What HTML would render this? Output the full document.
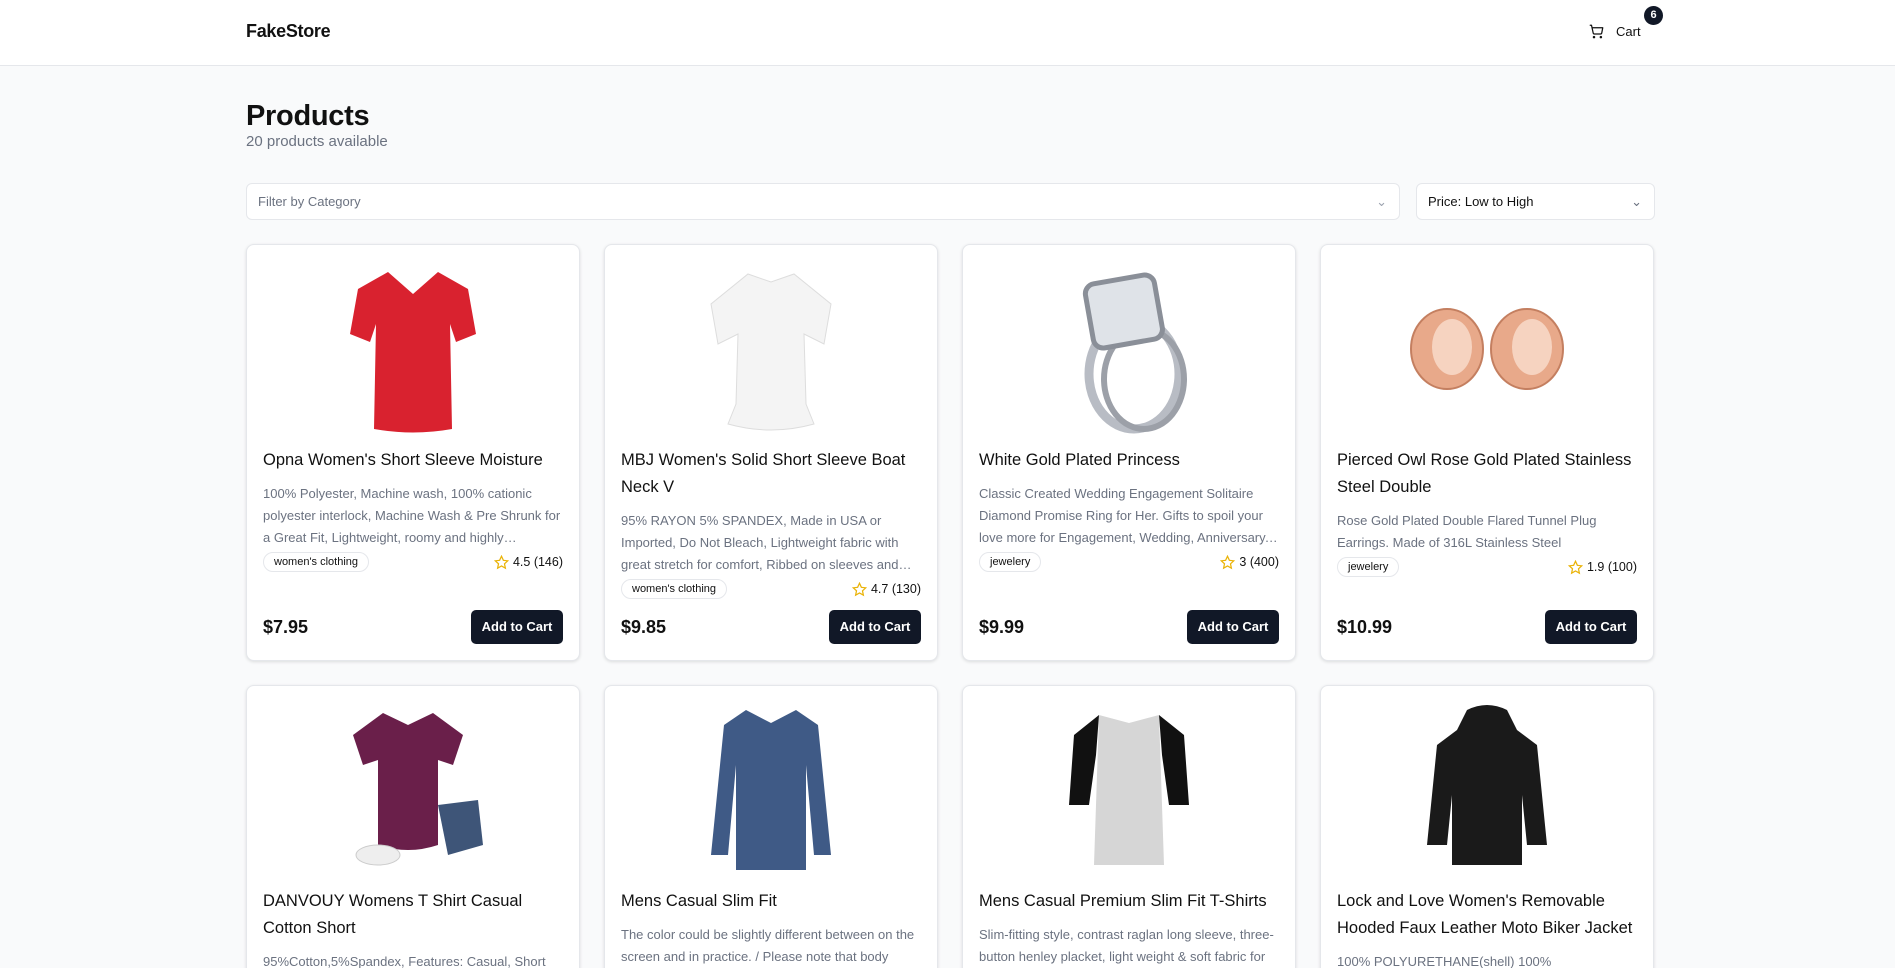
<!DOCTYPE html>
<html><head><meta charset="utf-8"><style>
*{box-sizing:border-box;margin:0;padding:0}
html,body{width:1895px;height:968px;overflow:hidden}
body{background:#f9fafb;font-family:"Liberation Sans",sans-serif;color:#111}
#root{position:relative;width:1895px;height:968px;overflow:hidden}
header{height:66px;background:#fff;border-bottom:1px solid #e5e7eb;position:relative}
.logo{position:absolute;left:246px;top:21px;font-size:18px;font-weight:bold;letter-spacing:-0.3px}
.cart{position:absolute;left:1589px;top:24px;display:flex;align-items:center;font-size:13px}
.cart svg{margin-right:12px}
.badge{position:absolute;left:1644px;top:6px;width:19px;height:19px;border-radius:50%;background:#111827;color:#fff;font-size:11px;font-weight:bold;text-align:center;line-height:19px}
.wrap{position:absolute;left:246px;width:1409px;top:0}
h1{position:absolute;top:100px;font-size:29px;font-weight:bold;letter-spacing:-0.3px}
.sub{position:absolute;top:133px;font-size:15px;color:#6b7280}
.sel{position:absolute;top:183px;height:37px;background:#fff;border:1px solid #e5e7eb;border-radius:6px;font-size:13px;padding:0 11px;line-height:35px}
.sel .ch{position:absolute;right:12px;top:0;color:#9ca3af}
.grid{position:absolute;top:244px;display:grid;grid-template-columns:repeat(4,334px);gap:24px}
.card{height:417px;background:#fff;border:1px solid #e5e7eb;border-radius:8px;box-shadow:0 1px 3px rgba(0,0,0,.12);padding:16px;position:relative}
.img{height:176px;display:flex;align-items:center;justify-content:center}
.t{margin-top:10px;font-size:16.5px;line-height:27px;font-weight:500;display:-webkit-box;-webkit-line-clamp:2;-webkit-box-orient:vertical;overflow:hidden}
.d{margin-top:9px;font-size:13px;line-height:22px;color:#6b7280;display:-webkit-box;-webkit-line-clamp:3;-webkit-box-orient:vertical;overflow:hidden}
.m{display:flex;justify-content:space-between;align-items:center;margin-top:3px;font-size:12.5px}
.pill{border:1px solid #e5e7eb;border-radius:10px;padding:2px 10px;font-size:11px;height:20px;line-height:15px}
.r{display:flex;align-items:center;gap:4px}
.bot{position:absolute;left:16px;right:16px;bottom:16px;display:flex;justify-content:space-between;align-items:center}
.price{font-size:18px;font-weight:bold}
.btn{background:#111827;color:#fff;font-size:13px;font-weight:bold;border-radius:5px;height:34px;width:92px;text-align:center;line-height:34px}
</style></head><body><div id="root">
<header><div class="logo">FakeStore</div>
<div class="cart"><svg width="15" height="15" viewBox="0 0 24 24" fill="none" stroke="#111" stroke-width="2" stroke-linecap="round" stroke-linejoin="round"><circle cx="8" cy="21" r="1"/><circle cx="19" cy="21" r="1"/><path d="M2 2h2l2.7 12.4a2 2 0 0 0 2 1.6h9.7a2 2 0 0 0 2-1.6L22 6H5.1"/></svg>Cart</div>
<div class="badge">6</div></header>
<div class="wrap">
<h1>Products</h1>
<div class="sub">20 products available</div>
<div class="sel" style="left:0;width:1154px;color:#6b7280">Filter by Category<span class="ch">⌄</span></div>
<div class="sel" style="left:1170px;width:239px">Price: Low to High<span class="ch" style="color:#6b7280">⌄</span></div>
<div class="grid">
<div class="card"><div class="img"><svg width="130" height="170" viewBox="0 0 130 170"><path d="M40 8 L65 30 L90 8 L120 25 L128 70 L108 78 L102 60 L104 165 Q65 172 26 165 L28 60 L22 78 L2 70 L10 25 Z" fill="#d9222f"/></svg></div>
<div class="t">Opna Women's Short Sleeve Moisture</div>
<div class="d">100% Polyester, Machine wash, 100% cationic polyester interlock, Machine Wash &amp; Pre Shrunk for a Great Fit, Lightweight, roomy and highly breathable</div>
<div class="m"><span class="pill">women's clothing</span><span class="r"><svg width="15" height="15" viewBox="0 0 24 24" fill="none" stroke="#eab308" stroke-width="2"><path d="M12 2l3 6.5 7 .8-5.2 4.8 1.4 7L12 17.6 5.8 21l1.4-7L2 9.3l7-.8z"/></svg>4.5 (146)</span></div>
<div class="bot"><span class="price">$7.95</span><span class="btn">Add to Cart</span></div></div>
<div class="card"><div class="img"><svg width="130" height="170" viewBox="0 0 130 170"><path d="M42 10 L65 18 L88 10 L125 40 L118 80 L98 70 L100 140 L108 160 Q65 172 22 160 L30 140 L32 70 L12 80 L5 40 Z" fill="#f4f4f4" stroke="#ddd"/></svg></div>
<div class="t">MBJ Women's Solid Short Sleeve Boat Neck V</div>
<div class="d">95% RAYON 5% SPANDEX, Made in USA or Imported, Do Not Bleach, Lightweight fabric with great stretch for comfort, Ribbed on sleeves and neckline</div>
<div class="m"><span class="pill">women's clothing</span><span class="r"><svg width="15" height="15" viewBox="0 0 24 24" fill="none" stroke="#eab308" stroke-width="2"><path d="M12 2l3 6.5 7 .8-5.2 4.8 1.4 7L12 17.6 5.8 21l1.4-7L2 9.3l7-.8z"/></svg>4.7 (130)</span></div>
<div class="bot"><span class="price">$9.85</span><span class="btn">Add to Cart</span></div></div>
<div class="card"><div class="img"><svg width="140" height="170" viewBox="0 0 140 170"><ellipse cx="75" cy="110" rx="45" ry="55" fill="none" stroke="#b8bcc4" stroke-width="9"/><ellipse cx="85" cy="115" rx="40" ry="50" fill="none" stroke="#9ca0a8" stroke-width="6"/><rect x="30" y="15" width="70" height="65" rx="10" fill="#dfe3e8" stroke="#8a8f98" stroke-width="5" transform="rotate(-10 65 48)"/></svg></div>
<div class="t">White Gold Plated Princess</div>
<div class="d">Classic Created Wedding Engagement Solitaire Diamond Promise Ring for Her. Gifts to spoil your love more for Engagement, Wedding, Anniversary, Valentine's Day...</div>
<div class="m"><span class="pill">jewelery</span><span class="r"><svg width="15" height="15" viewBox="0 0 24 24" fill="none" stroke="#eab308" stroke-width="2"><path d="M12 2l3 6.5 7 .8-5.2 4.8 1.4 7L12 17.6 5.8 21l1.4-7L2 9.3l7-.8z"/></svg>3 (400)</span></div>
<div class="bot"><span class="price">$9.99</span><span class="btn">Add to Cart</span></div></div>
<div class="card"><div class="img"><svg width="170" height="100" viewBox="0 0 170 100"><g fill="#e8a98a" stroke="#c47f60" stroke-width="2"><ellipse cx="45" cy="50" rx="36" ry="40"/><ellipse cx="125" cy="50" rx="36" ry="40"/></g><ellipse cx="50" cy="48" rx="20" ry="28" fill="#f6d3c0"/><ellipse cx="130" cy="48" rx="20" ry="28" fill="#f6d3c0"/></svg></div>
<div class="t">Pierced Owl Rose Gold Plated Stainless Steel Double</div>
<div class="d">Rose Gold Plated Double Flared Tunnel Plug Earrings. Made of 316L Stainless Steel</div>
<div class="m"><span class="pill">jewelery</span><span class="r"><svg width="15" height="15" viewBox="0 0 24 24" fill="none" stroke="#eab308" stroke-width="2"><path d="M12 2l3 6.5 7 .8-5.2 4.8 1.4 7L12 17.6 5.8 21l1.4-7L2 9.3l7-.8z"/></svg>1.9 (100)</span></div>
<div class="bot"><span class="price">$10.99</span><span class="btn">Add to Cart</span></div></div>
<div class="card"><div class="img"><svg width="150" height="170" viewBox="0 0 150 170"><path d="M45 8 L70 20 L95 8 L125 30 L115 60 L100 55 L100 140 Q70 150 40 140 L40 55 L25 60 L15 30 Z" fill="#6a1f4a"/><path d="M100 100 L140 95 L145 140 L110 150 Z" fill="#3e5578"/><ellipse cx="40" cy="150" rx="22" ry="10" fill="#eee" stroke="#ccc"/></svg></div>
<div class="t">DANVOUY Womens T Shirt Casual Cotton Short</div>
<div class="d">95%Cotton,5%Spandex, Features: Casual, Short Sleeve, Letter Print,V-Neck,Fashion Tees</div></div>
<div class="card"><div class="img"><svg width="130" height="170" viewBox="0 0 130 170"><path d="M40 5 L65 18 L90 5 L112 20 L125 150 L108 150 L100 60 L100 165 L30 165 L30 60 L22 150 L5 150 L18 20 Z" fill="#3f5a86"/></svg></div>
<div class="t">Mens Casual Slim Fit</div>
<div class="d">The color could be slightly different between on the screen and in practice. / Please note that body builds vary by person</div></div>
<div class="card"><div class="img"><svg width="130" height="170" viewBox="0 0 130 170"><path d="M35 10 L65 18 L95 10 L100 160 L30 160 Z" fill="#d6d6d6"/><path d="M35 10 L10 30 L5 100 L25 100 L32 50 Z M95 10 L120 30 L125 100 L105 100 L98 50 Z" fill="#111"/></svg></div>
<div class="t">Mens Casual Premium Slim Fit T-Shirts</div>
<div class="d">Slim-fitting style, contrast raglan long sleeve, three-button henley placket, light weight &amp; soft fabric for breathable and comfortable wearing</div></div>
<div class="card"><div class="img"><svg width="130" height="170" viewBox="0 0 130 170"><path d="M45 5 Q65 -5 85 5 L95 25 L115 40 L125 140 L105 140 L100 90 L100 160 L30 160 L30 90 L25 140 L5 140 L15 40 L35 25 Z" fill="#1a1a1a"/></svg></div>
<div class="t">Lock and Love Women's Removable Hooded Faux Leather Moto Biker Jacket</div>
<div class="d">100% POLYURETHANE(shell) 100% POLYESTER(lining) 75% POLYESTER 25% COTTON (SWEATER)</div></div>
</div></div>
</div></body></html>
